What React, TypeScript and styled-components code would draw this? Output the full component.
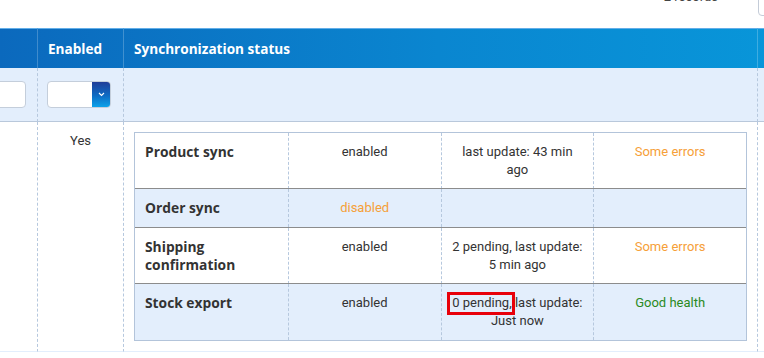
import React from 'react';
import styled, { createGlobalStyle } from 'styled-components';

const GlobalStyle = createGlobalStyle`
  html, body { margin: 0; padding: 0; background: #fff; }
  body { font-family: Roboto, "Liberation Sans", sans-serif; }
`;

const Page = styled.div`
  width: 764px;
  height: 358px;
  overflow: hidden;
  position: relative;
  background: #fff;
`;

const TopBar = styled.div`
  height: 28px;
  display: flex;
  justify-content: flex-end;
  align-items: flex-start;
  gap: 40px;
  font-size: 13px;
  color: #444;
`;

const Records = styled.span`
  margin-top: -12px;
  line-height: 18px;
`;

const PageSizeBox = styled.div`
  margin-top: -20px;
  width: 40px;
  height: 34px;
  margin-right: -36px;
  border: 1px solid #c4ccd8;
  border-radius: 4px;
`;

const Columns = `37px 86px 634px 40px`;

const Grid = styled.div`
  display: grid;
  grid-template-columns: ${Columns};
`;

const HeadBar = styled.div`
  grid-column: 1 / -1;
  display: grid;
  grid-template-columns: ${Columns};
  background: linear-gradient(90deg, #0b69bd 0%, #0a86d0 55%, #0897da 100%);
`;

const Head = styled.div<{ $first?: boolean }>`
  height: 39px;
  border-top: 1px solid #62aee8;
  border-left: ${p => (p.$first ? 'none' : '1px solid rgba(255,255,255,0.22)')};
  display: flex;
  align-items: center;
  padding-left: 10px;
  color: #fff;
  font-family: "Open Sans", sans-serif;
  font-weight: 700;
  font-size: 13.6px;
  white-space: nowrap;
`;

const FilterCell = styled.div<{ $first?: boolean }>`
  height: 53px;
  background: #e3eefc;
  border-bottom: 1px solid #b9c8db;
  border-left: ${p => (p.$first ? 'none' : '1px dashed #b6c8de')};
  display: flex;
  align-items: center;
  padding-left: 9px;
  overflow: hidden;
`;

const TextInput = styled.div`
  margin-left: -60px;
  width: 75px;
  height: 25px;
  background: #fff;
  border: 1px solid #c4cedb;
  border-radius: 4px;
  flex-shrink: 0;
`;

const Select = styled.div`
  width: 62px;
  height: 25px;
  background: #fff;
  border: 1px solid #c4cedb;
  border-radius: 4px;
  display: flex;
  justify-content: flex-end;
  overflow: hidden;
  flex-shrink: 0;
`;

const SelectButton = styled.div`
  width: 18px;
  height: 100%;
  background: linear-gradient(180deg, #203d98 0%, #0d6cc4 55%, #0ba2ea 100%);
  display: flex;
  align-items: center;
  justify-content: center;
`;

const BodyCell = styled.div<{ $first?: boolean }>`
  border-left: ${p => (p.$first ? 'none' : '1px dashed #b6c8de')};
  border-bottom: 1px solid #e3eefc;
  min-height: 228px;
  font-size: 13px;
  color: #333;
`;

const CenterText = styled.div`
  text-align: center;
  padding-top: 10px;
  line-height: 18px;
`;

const StatusWrap = styled.div`
  padding: 10px;
`;

const StatusTable = styled.div`
  border: 1px solid #b3c4da;
  display: flex;
  flex-direction: column;
`;

const StatusRow = styled.div<{ $alt?: boolean; $h: number }>`
  display: grid;
  grid-template-columns: repeat(4, 1fr);
  height: ${p => p.$h}px;
  background: ${p => (p.$alt ? '#e3eefc' : '#fff')};
  & + & {
    border-top: 1px solid #8c8c8c;
  }
`;

const StatusCell = styled.div<{ $label?: boolean; $tone?: 'warn' | 'ok' }>`
  padding: 10px;
  line-height: 18px;
  font-size: ${p => (p.$label ? '13.8px' : '13px')};
  font-family: ${p => (p.$label ? '"Open Sans", sans-serif' : 'Roboto, sans-serif')};
  font-weight: ${p => (p.$label ? 700 : 400)};
  text-align: ${p => (p.$label ? 'left' : 'center')};
  color: ${p => (p.$tone === 'warn' ? '#f6a038' : p.$tone === 'ok' ? '#2a8a1e' : '#333')};
  & + & {
    border-left: 1px dashed #b6c8de;
  }
`;

const Marked = styled.span`
  outline: 3px solid #e8000a;
  padding: 0 0 2px 2px;
  margin-left: -2px;
`;

const Chevron = () => (
  <svg width="7" height="5" viewBox="0 0 7 5">
    <path d="M1 1l2.5 2.5L6 1" fill="none" stroke="#fff" strokeWidth="1.1" />
  </svg>
);

type Status = {
  label: string;
  state: string;
  stateTone?: 'warn';
  update: React.ReactNode;
  health: string;
  healthTone?: 'warn' | 'ok';
  h: number;
};

const rows: Status[] = [
  { label: 'Product sync', state: 'enabled', update: 'last update: 43 min ago', health: 'Some errors', healthTone: 'warn', h: 55 },
  { label: 'Order sync', state: 'disabled', stateTone: 'warn', update: '', health: '', h: 38 },
  { label: 'Shipping confirmation', state: 'enabled', update: '2 pending, last update: 5 min ago', health: 'Some errors', healthTone: 'warn', h: 55 },
  {
    label: 'Stock export',
    state: 'enabled',
    update: (
      <>
        <Marked>0 pending,</Marked> last update: Just now
      </>
    ),
    health: 'Good health',
    healthTone: 'ok',
    h: 56,
  },
];

const App: React.FC = () => {
  return (
    <Page>
      <GlobalStyle />
      <TopBar>
        <Records>2 records</Records>
        <PageSizeBox />
      </TopBar>
      <Grid>
        <HeadBar>
          <Head $first />
          <Head>Enabled</Head>
          <Head>Synchronization status</Head>
          <Head />
        </HeadBar>

        <FilterCell $first>
          <TextInput />
        </FilterCell>
        <FilterCell>
          <Select>
            <SelectButton>
              <Chevron />
            </SelectButton>
          </Select>
        </FilterCell>
        <FilterCell />
        <FilterCell />

        <BodyCell $first />
        <BodyCell>
          <CenterText>Yes</CenterText>
        </BodyCell>
        <BodyCell>
          <StatusWrap>
            <StatusTable>
              {rows.map((r, i) => (
                <StatusRow key={r.label} $alt={i % 2 === 1} $h={r.h}>
                  <StatusCell $label>{r.label}</StatusCell>
                  <StatusCell $tone={r.stateTone}>{r.state}</StatusCell>
                  <StatusCell>{r.update}</StatusCell>
                  <StatusCell $tone={r.healthTone}>{r.health}</StatusCell>
                </StatusRow>
              ))}
            </StatusTable>
          </StatusWrap>
        </BodyCell>
        <BodyCell />
      </Grid>
    </Page>
  );
};

export default App;
